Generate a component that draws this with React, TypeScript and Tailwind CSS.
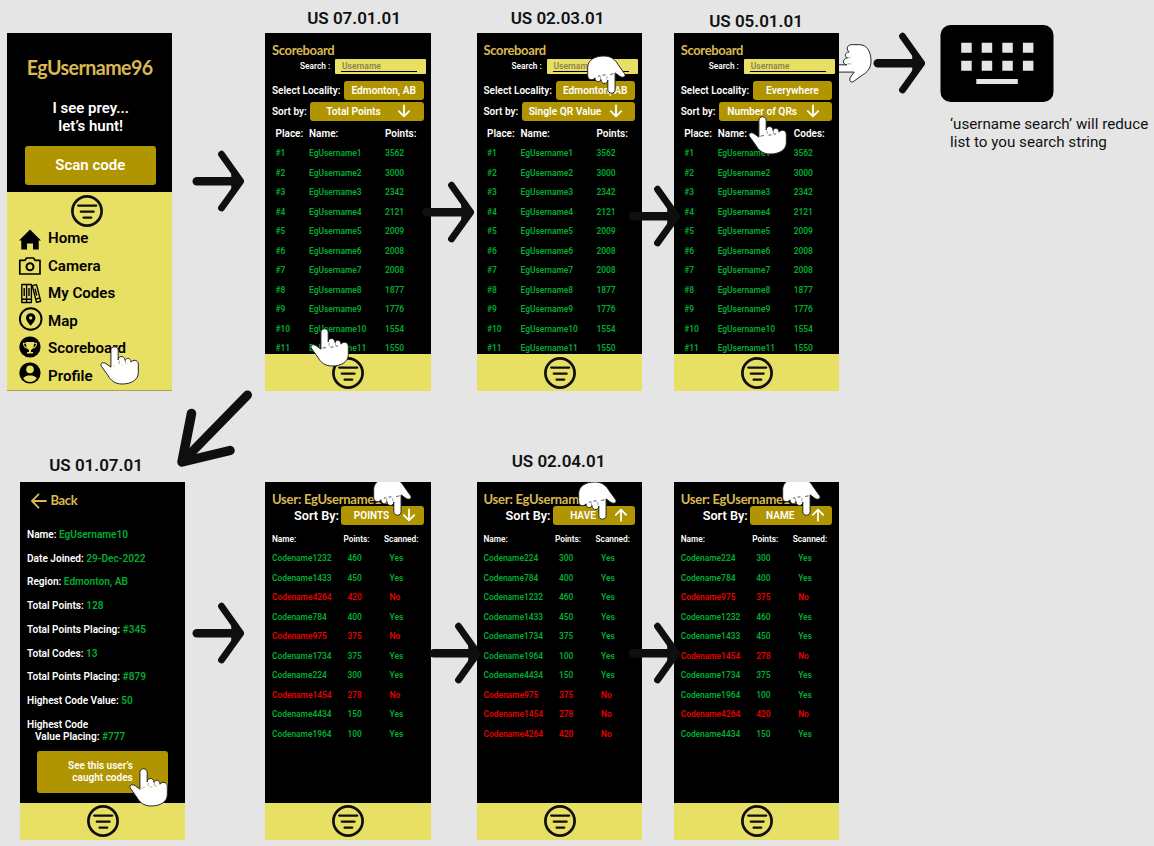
import type { ReactNode } from "react";

const roboto = "font-[Roboto,sans-serif]";

function Hand({ className, gap = "#000" }: { className: string; gap?: string }) {
  return (
    <svg viewBox="-2 -2 118 118" className={`absolute h-[39px] w-[39px] ${className}`}>
      <path
        d="M31 62V11C31-3 53-3 53 11V40C54 26 73 26 74 42C77 32 91 33 92 47C97 38 113 39 114 53V78C114 101 92 113 65 113C42 113 30 101 22 87L2 59C-3 50 8 46 16 51Z"
        fill="#fff"
        stroke="#222"
        strokeWidth="3"
        strokeLinejoin="round"
      />
      <path d="M56 42v11M75 43v8" stroke="#777" strokeWidth="2" />
      <path d="M36 59l10-2M60 56l9-1M76 53l7-1" stroke={gap} strokeWidth="2" />
    </svg>
  );
}

function FlowArrow({ className }: { className: string }) {
  return (
    <svg viewBox="0 0 52 62" fill="none" stroke="#0f0f0f" strokeLinecap="round" strokeLinejoin="round" className={`absolute h-[62px] w-[52px] ${className}`}>
      <path d="M4.8 31.2H45" strokeWidth="8.6" />
      <path d="M29.5 4.2L48.7 31.2L29.5 58" strokeWidth="6.8" />
      <path d="M40 23L47 31.2L40 39.5Z" fill="#0f0f0f" strokeWidth="1" />
    </svg>
  );
}

function FilterCircle() {
  return (
    <svg viewBox="0 0 32 32" fill="none" stroke="#0f0f0f" strokeLinecap="round" className="h-8 w-8">
      <circle cx="16" cy="16" r="14.6" strokeWidth="2.7" />
      <path d="M7.2 10.6h18M9.8 16.7h12.8M12.6 22.7h7.6" strokeWidth="2.3" />
    </svg>
  );
}

function SmallArrow({ up }: { up?: boolean }) {
  return (
    <svg viewBox="0 0 14 14" fill="none" stroke="#fff" strokeWidth="1.8" strokeLinecap="round" strokeLinejoin="round" className={up ? "h-3.5 w-3.5 rotate-180" : "h-3.5 w-3.5"}>
      <path d="M7 1.5V12M1.8 7.2L7 12.3L12.2 7.2" />
    </svg>
  );
}

function Label({ className, children }: { className: string; children: ReactNode }) {
  return <h2 className={`absolute w-[120px] text-center text-[17px] leading-5 font-semibold whitespace-nowrap text-[#111] ${className}`}>{children}</h2>;
}

function Phone({ className, footerClass = "", children }: { className: string; footerClass?: string; children: ReactNode }) {
  return (
    <section className={`absolute flex h-[358px] w-[165.5px] flex-col overflow-hidden bg-black ${className}`}>
      <div className="min-h-0 flex-1 overflow-hidden">{children}</div>
      <footer className={`flex h-[37px] shrink-0 items-center justify-center bg-[#e8df65] pl-px ${footerClass}`}>
        <FilterCircle />
      </footer>
    </section>
  );
}

const players: [string, string][] = [
  ["EgUsername1", "3562"],
  ["EgUsername2", "3000"],
  ["EgUsername3", "2342"],
  ["EgUsername4", "2121"],
  ["EgUsername5", "2009"],
  ["EgUsername6", "2008"],
  ["EgUsername7", "2008"],
  ["EgUsername8", "1877"],
  ["EgUsername9", "1776"],
  ["EgUsername10", "1554"],
  ["EgUsername11", "1550"],
];

function Scoreboard({ className, locality, sort, metric }: { className: string; locality: string; sort: string; metric: string }) {
  return (
    <Phone className={className}>
      <div className="pt-[9px] pl-[7px] whitespace-nowrap text-white">
        <h3 className="h-[17px] font-[Lato,sans-serif] text-[13px] leading-[17px] font-bold tracking-[-0.35px] text-[#dab851]">Scoreboard</h3>
        <div className="flex h-[15px] items-center pl-7">
          <span className="w-[35px] text-[8.3px] font-semibold">Search :</span>
          <div className="h-[15px] w-[91px] rounded-[1px] bg-[#e8df65] px-1.5">
            <div className="mr-[3px] h-[12.5px] border-b-[1.5px] border-black pl-px text-[8.5px] leading-[14px] font-semibold text-[#8b8355]">Username</div>
          </div>
        </div>
        <div className="mt-[7px] flex h-[19px] items-center">
          <span className="w-[72px] text-[10px] font-semibold">Select Locality:</span>
          <div className="flex h-[19px] w-[79.5px] items-center justify-center rounded-[3px] bg-[#b19500] text-[10.2px] font-semibold">{locality}</div>
        </div>
        <div className="mt-[2px] flex h-[18.5px] items-center">
          <span className="w-[38px] text-[10px] font-semibold">Sort by:</span>
          <div className="flex h-[18.5px] w-[113.5px] items-center rounded-[3px] bg-[#b19500]">
            <span className="w-[87px] text-center text-[10.2px] font-semibold">{sort}</span>
            <SmallArrow />
          </div>
        </div>
        <div className="mt-[5px] flex h-[15px] items-center pl-[3.5px] text-[10px] font-semibold">
          <span className="w-[33.5px]">Place:</span>
          <span className="w-[76px]">Name:</span>
          <span>{metric}</span>
        </div>
        <div className="mt-[3.5px]">
          {players.map(([name, points], i) => (
            <div key={name} className="flex h-[19.5px] items-center pl-[3.5px] text-[8.4px] font-semibold text-[#00ac32]">
              <span className="w-[33.5px]">#{i + 1}</span>
              <span className="w-[76px]">{name}</span>
              <span>{points}</span>
            </div>
          ))}
        </div>
      </div>
    </Phone>
  );
}

const codePoints: Record<string, number> = {
  "1232": 460,
  "1433": 450,
  "4264": 420,
  "784": 400,
  "975": 375,
  "1734": 375,
  "224": 300,
  "1454": 278,
  "4434": 150,
  "1964": 100,
};
const missing = ["4264", "975", "1454"];

function UserCodes({ className, sort, up, order, children }: { className: string; sort: string; up?: boolean; order: string[]; children: ReactNode }) {
  return (
    <Phone className={className}>
      <div className="pt-[9px] pl-[7px] whitespace-nowrap text-white">
        <h3 className="h-[15.5px] font-[Lato,sans-serif] text-[13px] leading-[17px] font-bold tracking-[-0.25px] text-[#dab851]">User: EgUsername10</h3>
        <div className="flex h-[18.5px] items-center pl-[22px]">
          <span className="w-[47px] text-[12.7px] font-semibold">Sort By:</span>
          <div className="flex h-[18.5px] w-[82.5px] items-center rounded-[3px] bg-[#b19500]">
            <span className="w-[61px] text-center text-[10px] font-semibold">{sort}</span>
            <SmallArrow up={up} />
          </div>
        </div>
        <div className="mt-[7px] flex h-[15px] items-center text-[8.3px] font-semibold">
          <span className="w-[71.5px]">Name:</span>
          <span className="w-[40.5px]">Points:</span>
          <span>Scanned:</span>
        </div>
        <div className="mt-[2.5px]">
          {order.map((id) => (
            <div key={id} className={`flex h-[19.5px] items-center text-[8.4px] font-semibold ${missing.includes(id) ? "text-[#e60000]" : "text-[#00ac32]"}`}>
              <span className="w-[75.5px]">Codename{id}</span>
              <span className="w-[42px]">{codePoints[id]}</span>
              <span>{missing.includes(id) ? "No" : "Yes"}</span>
            </div>
          ))}
        </div>
      </div>
      {children}
    </Phone>
  );
}

const profile: [string, string][] = [
  ["Name:", "EgUsername10"],
  ["Date Joined:", "29-Dec-2022"],
  ["Region:", "Edmonton, AB"],
  ["Total Points:", "128"],
  ["Total Points Placing:", "#345"],
  ["Total Codes:", "13"],
  ["Total Points Placing:", "#879"],
  ["Highest Code Value:", "50"],
];

function Profile() {
  return (
    <Phone className="top-[481.5px] left-[19.5px]" footerClass="pl-[3px]">
      <div className="pl-[7.5px] whitespace-nowrap text-white">
        <div className="flex h-[39px] items-center gap-1 pl-[3.5px] text-[#dab851]">
          <svg viewBox="0 0 16 16" fill="none" stroke="currentColor" strokeWidth="1.8" strokeLinecap="round" strokeLinejoin="round" className="h-4 w-4">
            <path d="M15 8H1.5M7.5 1.3L1 8L7.5 14.7" />
          </svg>
          <h3 className="font-[Lato,sans-serif] text-[13px] font-bold tracking-[-0.35px]">Back</h3>
        </div>
        <div className="mt-[2px] text-[10.1px] font-semibold">
          {profile.map(([label, value], i) => (
            <p key={i} className="flex h-[23.75px] items-center gap-[2.5px]">
              <span>{label}</span>
              <span className="text-[#00ac32]">{value}</span>
            </p>
          ))}
          <p className="mt-1.5 leading-3">
            Highest Code
            <br />
            <span className="ml-2">Value Placing: </span>
            <span className="text-[#00ac32]">#777</span>
          </p>
        </div>
        <div className="mt-[8px] ml-2.5 flex h-[42px] w-[131px] items-center justify-center rounded-[3px] bg-[#b19500] pr-1 text-center text-[10px] leading-3 font-semibold">
          <span>
            See this user’s
            <br />
            <span className="ml-1">caught codes</span>
          </span>
        </div>
      </div>
    </Phone>
  );
}

const iconClass = "h-6 w-6 overflow-visible";
const menu: [string, ReactNode][] = [
  [
    "Home",
    <svg viewBox="0 0 24 24" className={iconClass}>
      <path d="M12 2.5L23 13.4H20.7V22.5H15V16.5H9V22.5H3.3V13.4H1Z" />
    </svg>,
  ],
  [
    "Camera",
    <svg viewBox="0 0 24 24" fill="none" stroke="#000" strokeWidth="1.7" strokeLinejoin="round" className={iconClass}>
      <path d="M1.8 6.3H7L8.5 4H15.5L17 6.3H22V20H1.8Z" />
      <circle cx="12" cy="12.8" r="3.5" strokeWidth="2" />
    </svg>,
  ],
  [
    "My Codes",
    <svg viewBox="0 0 24 24" fill="none" stroke="#000" strokeWidth="1.4" strokeLinejoin="round" className={iconClass}>
      <path d="M3.8 2.5H8.6V20.5H3.8ZM8.6 2.5H13.4V20.5H8.6ZM14.3 3.6L18.5 2.6L22.7 19.2L18.5 20.3ZM6.2 6V14M11 6V14M3.8 17.3H13.4M17 6.7L18.8 13.5M17.7 17.1L22 16" />
    </svg>,
  ],
  [
    "Map",
    <svg viewBox="0 0 24 24" className={iconClass}>
      <circle cx="12.7" cy="10" r="10.8" fill="none" stroke="#000" strokeWidth="1.9" />
      <path fillRule="evenodd" d="M12.7 4.2a4.7 4.7 0 0 0-4.7 4.7c0 3.3 4.7 7.6 4.7 7.6s4.7-4.3 4.7-7.6a4.7 4.7 0 0 0-4.7-4.7Zm0 3a1.7 1.7 0 1 1 0 3.4a1.7 1.7 0 0 1 0-3.4Z" />
    </svg>,
  ],
  [
    "Scoreboard",
    <svg viewBox="0 0 24 24" className={iconClass}>
      <circle cx="12" cy="10" r="10.6" />
      <path d="M8 5H16C16 10 15.3 12 13 13V15H15V16.5H9V15H11V13C8.7 12 8 10 8 5Z" fill="#e8df65" />
      <path d="M8.2 6.2H5.5C5.5 9 6.5 10.5 9 11M15.8 6.2H18.5C18.5 9 17.5 10.5 15 11" fill="none" stroke="#e8df65" strokeWidth="1.1" />
    </svg>,
  ],
  [
    "Profile",
    <svg viewBox="0 0 24 24" className={iconClass}>
      <circle cx="12" cy="9" r="10.6" />
      <circle cx="12" cy="5.4" r="3.8" fill="#e8df65" />
      <path d="M5.2 14.2C6.5 11.9 9.5 11.4 12 11.4S17.5 11.9 18.8 14.2C17.5 16.6 15 18 12 18S6.5 16.6 5.2 14.2Z" fill="#e8df65" />
    </svg>,
  ],
];

function HomeMenu() {
  return (
    <section className="absolute top-[33px] left-[6.5px] flex h-[358px] w-[165.5px] flex-col bg-black">
      <div className="h-[158.5px] shrink-0 text-center text-white">
        <h1 className="h-[66px] origin-center scale-x-[0.935] pt-5 font-[Lato,sans-serif] text-[21px] leading-7 font-bold tracking-[-0.6px] text-[#dab851]">EgUsername96</h1>
        <p className="h-[47px] pl-[3px] text-[15px] leading-[18px] font-semibold">
          I see prey...
          <br />
          let’s hunt!
        </p>
        <div className="mx-auto flex h-[38.5px] w-[131.5px] translate-x-px items-center justify-center rounded-[3px] bg-[#b19500] text-[15px] font-semibold">Scan code</div>
      </div>
      <div className="flex-1 border-b border-[#a9a257] bg-[#e8df65]">
        <div className="flex h-[33px] items-end justify-center pr-[5px]">
          <div className="translate-y-0.5">
            <FilterCircle />
          </div>
        </div>
        <ul>
          {menu.map(([name, icon]) => (
            <li key={name} className="flex h-[27.5px] items-center gap-[6px] pt-px pl-[11.5px] text-[15.1px] font-semibold">
              {icon}
              {name}
            </li>
          ))}
        </ul>
      </div>
    </section>
  );
}

function Keyboard() {
  return (
    <svg viewBox="0 0 113 77" className="absolute top-[25px] left-[940px] h-[77px] w-[114px]">
      <rect width="113" height="77" rx="10" />
      <path
        fill="#e5e5e5"
        d="M20.7 17.7h10.5v10h-10.5zM41.2 17.7h10.5v10h-10.5zM61.8 17.7h10.5v10h-10.5zM82.4 17.7h10.5v10h-10.5zM20.7 35.8h10.5v10h-10.5zM41.2 35.8h10.5v10h-10.5zM61.8 35.8h10.5v10h-10.5zM82.4 35.8h10.5v10h-10.5zM35.8 54h41.5v5h-41.5z"
      />
    </svg>
  );
}

export default function App() {
  return (
    <main className={`relative h-[846px] w-[1154px] overflow-hidden bg-[#e5e5e5] ${roboto}`}>
      <HomeMenu />

      <Label className="top-[8px] left-[294px]">US 07.01.01</Label>
      <Label className="top-[8px] left-[497.5px]">US 02.03.01</Label>
      <Label className="top-[11px] left-[696px]">US 05.01.01</Label>
      <Label className="top-[455px] left-[36px]">US 01.07.01</Label>
      <Label className="top-[451px] left-[498.5px]">US 02.04.01</Label>

      <Hand className="top-[44px] left-[833px] -rotate-90" gap="#e5e5e5" />
      <Scoreboard className="top-[33px] left-[265px]" locality="Edmonton, AB" sort="Total Points" metric="Points:" />
      <Scoreboard className="top-[33px] left-[476.5px]" locality="Edmonton, AB" sort="Single QR Value" metric="Points:" />
      <Scoreboard className="top-[33px] left-[673.7px]" locality="Everywhere" sort="Number of QRs" metric="Codes:" />

      <Profile />
      <UserCodes className="top-[481.5px] left-[265px]" sort="POINTS" order={["1232", "1433", "4264", "784", "975", "1734", "224", "1454", "4434", "1964"]}>
        <Hand className="top-[-5px] left-[108px] rotate-180" />
      </UserCodes>
      <UserCodes className="top-[481.5px] left-[476.5px]" sort="HAVE" up order={["224", "784", "1232", "1433", "1734", "1964", "4434", "975", "1454", "4264"]}>
        <Hand className="top-[-1px] left-[101px] rotate-180" />
      </UserCodes>
      <UserCodes className="top-[481.5px] left-[673.7px]" sort="NAME" up order={["224", "784", "975", "1232", "1433", "1454", "1734", "1964", "4264", "4434"]}>
        <Hand className="top-[-5px] left-[108px] rotate-180" />
      </UserCodes>

      <FlowArrow className="top-[150px] left-[192px]" />
      <FlowArrow className="top-[181px] left-[422px]" />
      <FlowArrow className="top-[185px] left-[628px]" />
      <FlowArrow className="top-[32px] left-[873px]" />
      <FlowArrow className="top-[602px] left-[192px]" />
      <FlowArrow className="top-[622px] left-[429px]" />
      <FlowArrow className="top-[622px] left-[628px]" />
      <svg viewBox="0 0 80 80" fill="none" stroke="#0f0f0f" strokeLinecap="round" strokeLinejoin="round" className="absolute top-[389px] left-[174px] h-20 w-20">
        <path d="M73.5 6L10 71" strokeWidth="9" />
        <path d="M17.5 24.5L8 73L56 61.5" strokeWidth="9.5" />
      </svg>

      <Hand className="top-[346px] left-[100px]" gap="#e8df65" />
      <Hand className="top-[328px] left-[310px]" />
      <Hand className="top-[55px] left-[587px] rotate-180" />
      <Hand className="top-[116px] left-[748px]" />
      <Hand className="top-[768px] left-[129px]" gap="#b19500" />

      <Keyboard />
      <p className="absolute top-[115px] left-[950px] text-[15.2px] leading-[18px] whitespace-nowrap text-[#111]">
        ‘username search’ will reduce
        <br />
        list to you search string
      </p>
    </main>
  );
}
